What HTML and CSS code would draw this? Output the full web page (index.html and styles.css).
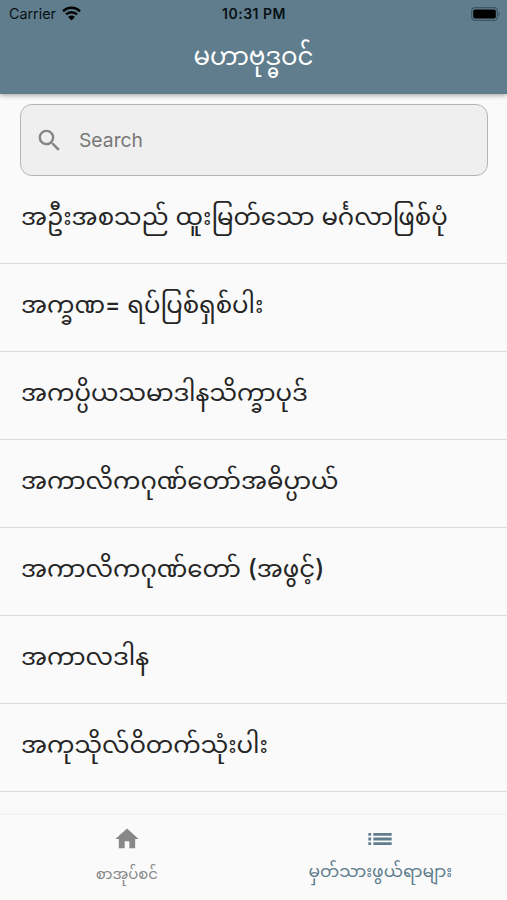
FILE: index.html
```html
<!DOCTYPE html>
<html lang="my">
  <head>
    <meta charset="utf-8" />
    <title>မဟာဗုဒ္ဓဝင်</title>
    <meta name="viewport" content="width=device-width, initial-scale=1.0" />
    <link rel="stylesheet" href="styles.css">
  </head>
  <body>
    <header class="appbar">
      <div class="status">
        <div class="carrier">
          <span>Carrier</span>
          <svg class="wifi" viewBox="0 0 18 14">
            <path d="M1 4.9a11.3 11.3 0 0 1 16 0M3.8 7.9a7.4 7.4 0 0 1 10.4 0" fill="none" stroke="#000" stroke-width="2.4"/>
            <path d="M5.8 10.2a4.6 4.6 0 0 1 6.4 0L9 13.6z"/>
          </svg>
        </div>
        <div class="time">10:31 PM</div>
        <svg class="battery" viewBox="0 0 30 14">
          <rect x=".7" y=".7" width="25.6" height="12.6" rx="3.4" fill="none" stroke="#3f5661" stroke-width="1.2"/>
          <rect x="2.2" y="2.4" width="22.6" height="9.2" rx="1.8"/>
          <path d="M27.5 4.8q3 2.2 0 4.4z" fill="#3f5661"/>
        </svg>
      </div>
      <h1 class="title">မဟာဗုဒ္ဓဝင်</h1>
    </header>

    <main class="content">
      <div class="search">
        <svg class="search-icon" viewBox="0 0 24 24"><path d="M15.5 14h-.79l-.28-.27A6.47 6.47 0 0 0 16 9.5 6.5 6.5 0 1 0 9.5 16c1.61 0 3.09-.59 4.23-1.57l.27.28v.79l5 4.99L20.49 19l-4.99-5zm-6 0C7.01 14 5 11.99 5 9.5S7.01 5 9.5 5 14 7.01 14 9.5 11.99 14 9.5 14z"/></svg>
        <span>Search</span>
      </div>
      <ul class="list">
        <li>အဦးအစသည် ထူးမြတ်သော မင်္ဂလာဖြစ်ပုံ</li>
        <li>အက္ခဏ<span class="latin equals">=</span> ရပ်ပြစ်ရှစ်ပါး</li>
        <li>အကပ္ပိယသမာဒါနသိက္ခာပုဒ်</li>
        <li>အကာလိကဂုဏ်တော်အဓိပ္ပာယ်</li>
        <li>အကာလိကဂုဏ်တော် <span class="latin">(</span>အဖွင့်<span class="latin">)</span></li>
        <li>အကာလဒါန</li>
        <li>အကုသိုလ်ဝိတက်သုံးပါး</li>
      </ul>
    </main>

    <nav class="tabs">
      <div class="tab">
        <svg viewBox="0 0 24 24"><path d="M10 20v-6h4v6h5v-8h3L12 3 2 12h3v8z"/></svg>
        <span>စာအုပ်စင်</span>
      </div>
      <div class="tab active">
        <svg viewBox="0 0 24 24"><path d="M2 17.2h2.4v-2.4H2zm0-4h2.4v-2.4H2zm0-4h2.4V6.8H2zM6.3 17.2H22v-2.4H6.3zm0-4H22v-2.4H6.3zm0-6.4v2.4H22V6.8z"/></svg>
        <span>မှတ်သားဖွယ်ရာများ</span>
      </div>
    </nav>
  </body>
</html>
```
FILE: styles.css
```css
* {
  box-sizing: border-box;
}
body {
  margin: 0;
  height: 900px;
  display: flex;
  flex-direction: column;
  overflow: hidden;
  background-color: #fafafa;
  color: #252525;
  font-family: Inter, "Noto Sans Myanmar", "Noto Sans", sans-serif;
}
.appbar {
  flex: none;
  height: 94px;
  background-color: #607d8d;
  box-shadow: 0 1px 5px rgba(0, 0, 0, 0.4);
}
.status {
  display: grid;
  grid-template-columns: 1fr auto 1fr;
  align-items: center;
  height: 27px;
  padding: 0 6px 0 9px;
  color: #081014;
  font-size: 14.3px;
}
.carrier {
  display: flex;
  align-items: center;
  gap: 6px;
}
.wifi {
  width: 19px;
  height: 15px;
}
.time {
  padding-right: 2px;
  font-size: 14px;
  font-weight: 600;
  letter-spacing: 0.5px;
}
.battery {
  width: 30px;
  height: 14px;
  justify-self: end;
}
.title {
  margin: 0;
  height: 60px;
  line-height: 58px;
  text-align: center;
  color: #fff;
  font-size: 24.5px;
  font-weight: 400;
}
.content {
  flex: 1;
  min-height: 0;
  padding-top: 10px;
}
.search {
  display: flex;
  align-items: center;
  gap: 15px;
  height: 72px;
  margin: 0 19px 0 20px;
  padding-left: 14px;
  border: 1.5px solid #b5b5b5;
  border-radius: 12px;
  background-color: #efefef;
  color: #777;
  font-family: Inter, sans-serif;
  font-size: 19.3px;
}
.search-icon {
  width: 29px;
  height: 29px;
  fill: #858585;
}
.list {
  margin: 0;
  padding: 0;
  list-style: none;
}
.list li {
  height: 88px;
  padding-left: 21px;
  line-height: 81px;
  border-bottom: 1px solid #dcdcdc;
  font-size: 24.4px;
  white-space: nowrap;
}
.latin {
  font-weight: 500;
}
.equals {
  font-size: 23px;
}
.tabs {
  flex: none;
  display: flex;
  height: 85px;
  background-color: #fafafa;
  box-shadow: 0 -1px 2px rgba(0, 0, 0, 0.05);
}
.tab {
  flex: 1;
  display: flex;
  flex-direction: column;
  align-items: center;
  padding-top: 10px;
  color: #888;
  font-size: 14.8px;
}
.tab svg {
  width: 28px;
  height: 28px;
  fill: currentColor;
}
.tab span {
  line-height: 42px;
}
.tab.active {
  color: #607d8d;
  font-size: 17.1px;
}
.tab.active span {
  line-height: 36px;
}
```
